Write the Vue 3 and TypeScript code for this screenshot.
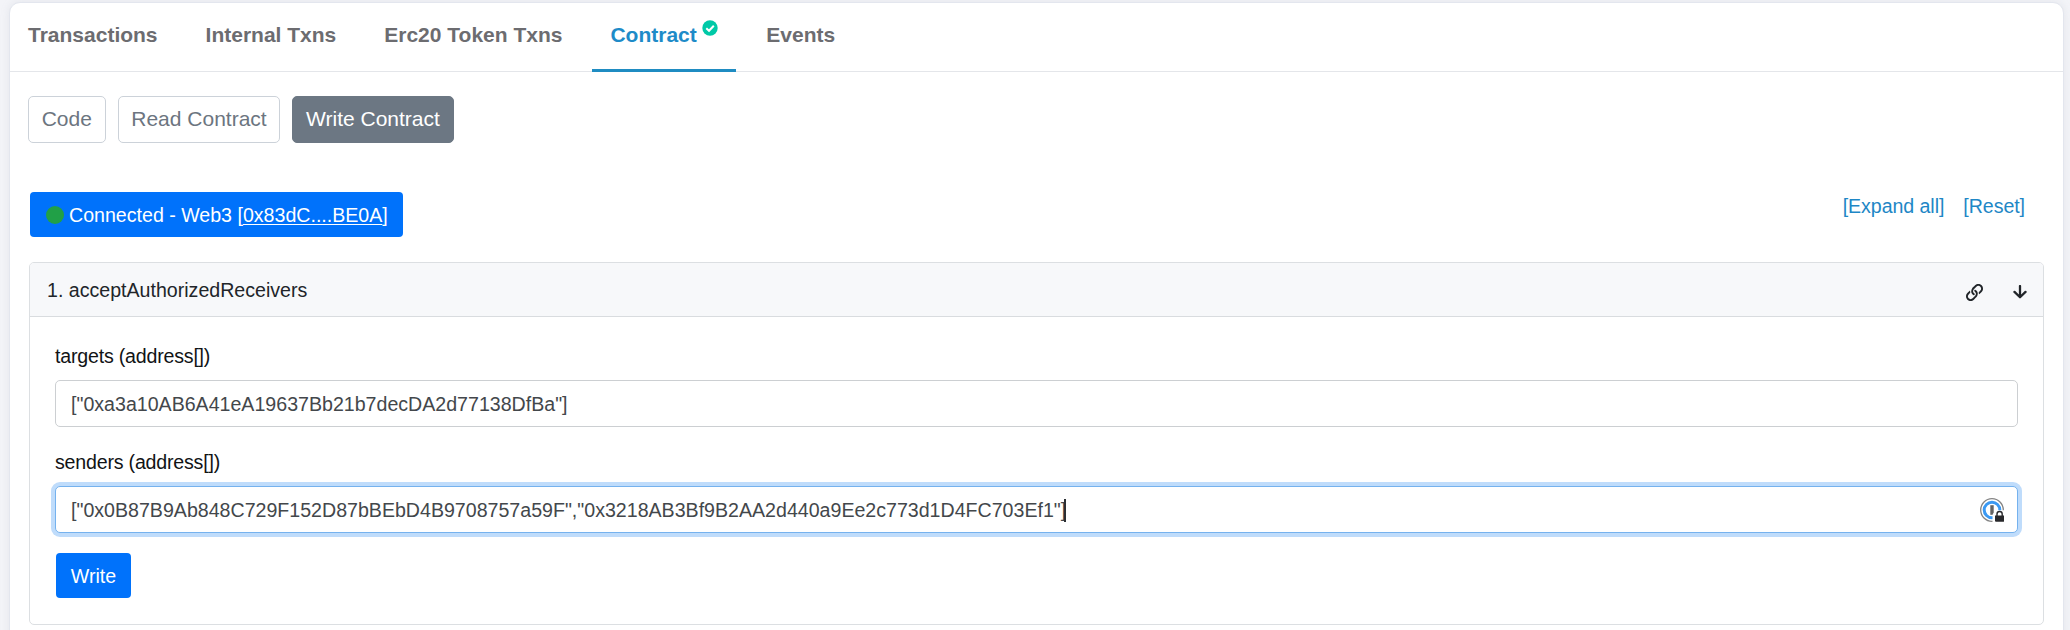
<script setup lang="ts">
interface Tab {
  label: string
  active?: boolean
  verified?: boolean
}

interface Field {
  label: string
  value: string
  focused: boolean
}

const tabs: Tab[] = [
  { label: 'Transactions' },
  { label: 'Internal Txns' },
  { label: 'Erc20 Token Txns' },
  { label: 'Contract', active: true, verified: true },
  { label: 'Events' },
]

const modes = [
  { label: 'Code', active: false },
  { label: 'Read Contract', active: false },
  { label: 'Write Contract', active: true },
]

const fields: Field[] = [
  {
    label: 'targets (address[])',
    value: '["0xa3a10AB6A41eA19637Bb21b7decDA2d77138DfBa"]',
    focused: false,
  },
  {
    label: 'senders (address[])',
    value:
      '["0x0B87B9Ab848C729F152D87bBEbD4B9708757a59F","0x3218AB3Bf9B2AA2d440a9Ee2c773d1D4FC703Ef1"]',
    focused: true,
  },
]
</script>

<template>
  <div class="page">
    <main class="card">
      <nav class="tabs">
        <a v-for="tab in tabs" :key="tab.label" class="tab" :class="{ active: tab.active }">
          <span>{{ tab.label }}</span>
          <svg v-if="tab.verified" class="verified" viewBox="0 0 16 16">
            <circle cx="8" cy="8" r="7.7" fill="#00c9a7" />
            <path d="M4.3 8.3 7 10.8 11.8 5.7" fill="none" stroke="#fff" stroke-width="2" />
          </svg>
        </a>
      </nav>

      <div class="modes">
        <button v-for="m in modes" :key="m.label" class="mode" :class="{ active: m.active }">{{ m.label }}</button>
      </div>

      <div class="toolbar">
        <button class="connect">
          <i class="dot"></i>
          <span>Connected - Web3 [<u>0x83dC....BE0A</u>]</span>
        </button>
        <div class="links">
          <a>[Expand all]</a>
          <a>[Reset]</a>
        </div>
      </div>

      <section class="panel">
        <header class="head">
          <span class="title">1. acceptAuthorizedReceivers</span>
          <svg class="link-icon" viewBox="0 0 512 512">
            <path
              fill="#212529"
              d="M314.222 197.78c51.091 51.091 54.377 132.287 9.75 187.16-6.242 7.73-2.784 3.865-84.94 86.02-54.696 54.696-143.266 54.745-197.99 0-54.711-54.69-54.734-143.255 0-197.99 32.773-32.773 51.835-51.899 63.409-63.457 7.463-7.452 20.331-2.354 20.486 8.192a173.31 173.31 0 0 0 4.746 37.828c.966 4.029-.272 8.269-3.202 11.198L80.632 312.57c-32.755 32.775-32.887 85.892 0 118.8 32.775 32.755 85.892 32.887 118.8 0l75.19-75.2c32.718-32.725 32.777-86.013 0-118.79a83.722 83.722 0 0 0-22.814-16.229c-4.623-2.233-7.182-7.25-6.561-12.346 1.356-11.122 6.296-21.885 14.815-30.405l4.375-4.375c3.625-3.626 9.177-4.594 13.76-2.294 12.999 6.524 25.187 15.211 36.025 26.049zM470.958 41.04c-54.724-54.745-143.294-54.696-197.99 0-82.156 82.156-78.698 78.29-84.94 86.02-44.627 54.873-41.341 136.069 9.75 187.16 10.838 10.838 23.026 19.525 36.025 26.049 4.582 2.3 10.134 1.331 13.76-2.294l4.375-4.375c8.52-8.519 13.459-19.283 14.815-30.405.621-5.096-1.938-10.113-6.561-12.346a83.706 83.706 0 0 1-22.814-16.229c-32.777-32.777-32.718-86.065 0-118.79l75.19-75.2c32.908-32.887 86.025-32.755 118.8 0 32.887 32.908 32.755 86.025 0 118.8l-45.848 45.84c-2.93 2.929-4.168 7.169-3.202 11.198a173.31 173.31 0 0 1 4.746 37.828c.155 10.546 13.023 15.644 20.486 8.192 11.574-11.558 30.636-30.684 63.409-63.457 54.733-54.735 54.71-143.3-.001-197.991z"
            />
          </svg>
          <svg class="arrow-icon" viewBox="0 0 14 14">
            <path
              d="M7 1.1V12M1.5 6.9 7 12.3 12.5 6.9"
              fill="none"
              stroke="#212529"
              stroke-width="2.3"
              stroke-linecap="round"
              stroke-linejoin="round"
            />
          </svg>
        </header>

        <div class="body">
          <div v-for="f in fields" :key="f.label" class="field">
            <label class="label">{{ f.label }}</label>
            <div class="input" :class="{ focused: f.focused }">
              <span class="value">{{ f.value }}</span>
              <i v-if="f.focused" class="caret"></i>
              <svg v-if="f.focused" class="keeper" viewBox="0 0 24 24">
                <circle cx="12" cy="12" r="11.3" fill="none" stroke="#858585" stroke-width="1.3" />
                <circle cx="12" cy="12" r="7.8" fill="none" stroke="#3b99f2" stroke-width="3" />
                <rect x="10.3" y="7.2" width="3.4" height="9.6" fill="#636363" />
                <path d="M12.5 24V17.5Q12.5 15.5 14.2 14.5L15.2 12.3H24V24Z" fill="#fff" />
                <path d="M15 17.6h9.2v5.2q0 1-1 1H16q-1 0-1-1Z" fill="#28282b" />
                <path d="M17 18v-1.9a2.6 2.6 0 0 1 5.2 0V18" fill="none" stroke="#28282b" stroke-width="1.4" />
              </svg>
            </div>
          </div>
          <button class="write">Write</button>
        </div>
      </section>
    </main>
  </div>
</template>

<style>
body {
  margin: 0;
  overflow: hidden;
}
</style>

<style scoped>
.page {
  box-sizing: border-box;
  width: 2070px;
  height: 630px;
  padding: 2px 6px 0 9px;
  overflow: hidden;
  background: #f3f4f8;
  font-family: 'Liberation Sans', Arial, sans-serif;
  font-size: 19.6px;
  color: #212529;
}

.card {
  box-sizing: border-box;
  height: 660px;
  border: 1px solid #e3e6ee;
  border-radius: 11px;
  background: #fff;
  box-shadow: 0 0 10px rgba(140, 152, 164, 0.14);
}

.tabs {
  display: flex;
  gap: 12px;
  height: 68px;
  border-bottom: 1px solid #e4e6ea;
}

.tab {
  box-sizing: border-box;
  display: flex;
  height: 69px;
  padding: 16px 18px 0;
  font-size: 21px;
  font-weight: 700;
  line-height: 32px;
  color: #6c6c70;
}

.tab.active {
  border-bottom: 3px solid #1f8cc2;
  color: #1e8bc8;
}

.verified {
  width: 16px;
  height: 16px;
  margin: 1px 0 0 5.5px;
}

button {
  box-sizing: border-box;
  margin: 0;
  font-family: inherit;
}

.modes {
  display: flex;
  gap: 12px;
  padding: 24px 18px 0;
}

.mode {
  height: 47px;
  padding: 0 12.7px 2px;
  border: 1px solid #ccd2d9;
  border-radius: 5px;
  background: #fff;
  font-size: 21px;
  color: #6c7580;
}

.mode.active {
  border-color: #6c7783;
  background: #6c7783;
  color: #fff;
}

.toolbar {
  display: flex;
  align-items: flex-start;
  justify-content: space-between;
  padding: 49px 38px 0 20px;
}

.connect {
  display: flex;
  align-items: center;
  height: 45px;
  padding: 1px 15px 0 16px;
  border: 0;
  border-radius: 4px;
  background: #0072fb;
  font-size: 19.6px;
  color: #fff;
}

.connect span {
  padding-top: 1px;
}

.dot {
  width: 18px;
  height: 18px;
  margin-right: 5px;
  border-radius: 50%;
  background: #21a047;
}

.connect u {
  text-decoration-thickness: 1px;
  text-underline-offset: 2px;
}

.links {
  display: flex;
  gap: 19px;
  padding-top: 2px;
  line-height: 24px;
  letter-spacing: -0.06px;
  color: #1e87c6;
}

.panel {
  box-sizing: border-box;
  height: 363px;
  margin: 25px 19px 0;
  border: 1px solid #dcdfe2;
  border-radius: 5px;
}

.head {
  display: flex;
  align-items: center;
  height: 53px;
  padding: 0 16px 0 17px;
  border-bottom: 1px solid #d9dcdf;
  border-radius: 4px 4px 0 0;
  background: #f7f8fa;
}

.title {
  flex: 1;
  padding-top: 2px;
}

.link-icon {
  width: 17px;
  height: 17px;
  margin: 6px 30px 0 0;
}

.arrow-icon {
  width: 14px;
  height: 14px;
  margin-top: 4px;
}

.body {
  padding: 25px 25px 0;
}

.field {
  margin-bottom: 20px;
}

.field + .field {
  margin-top: 21px;
}

.label {
  display: block;
  height: 38px;
  line-height: 29px;
  letter-spacing: -0.2px;
  color: #111315;
}

.input {
  box-sizing: border-box;
  display: flex;
  align-items: center;
  height: 47px;
  padding: 1px 13px 0 15px;
  border: 1px solid #cccfd2;
  border-radius: 5px;
  background: #fff;
  color: #43474b;
}

.input.focused {
  border-color: #75b2ee;
  box-shadow: 0 0 0 4px #bfdcfb;
}

.value {
  white-space: nowrap;
}

.caret {
  width: 2px;
  height: 23px;
  margin-left: -2px;
  background: #2b2f33;
}

.keeper {
  width: 24px;
  height: 24px;
  margin-left: auto;
}

.write {
  display: block;
  width: 75px;
  height: 45px;
  margin-left: 1px;
  padding: 2px 0 0;
  border: 0;
  border-radius: 4px;
  background: #0072fb;
  font-size: 19.6px;
  color: #fff;
}
</style>
